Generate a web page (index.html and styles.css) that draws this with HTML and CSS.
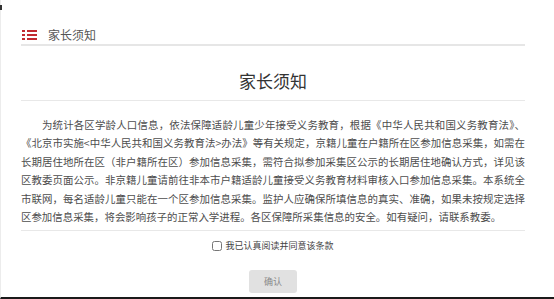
FILE: index.html
```html
<!DOCTYPE html>
<html lang="zh-CN">
<head>
<meta charset="utf-8">
<link rel="stylesheet" href="styles.css">
</head>
<body>
<div class="page">
  <div class="header">
    <svg class="list-icon" width="15" height="10" viewBox="0 0 15 10">
      <rect x="0" y="0" width="3" height="2" fill="#c12a30"/>
      <rect x="5" y="0" width="10" height="2" fill="#c12a30"/>
      <rect x="0" y="4" width="3" height="2" fill="#c12a30"/>
      <rect x="5" y="4" width="10" height="2" fill="#c12a30"/>
      <rect x="0" y="8" width="3" height="2" fill="#c12a30"/>
      <rect x="5" y="8" width="10" height="2" fill="#c12a30"/>
    </svg>
    <span class="header-title">家长须知</span>
  </div>
  <h1 class="title">家长须知</h1>
  <p class="notice"><span class="first-line">为统计各区学龄人口信息，依法保障适龄儿童少年接受义务教育，根据《中华人民共和国义务教育法》、</span>《北京市实施&lt;中华人民共和国义务教育法&gt;办法》等有关规定，京籍儿童在户籍所在区参加信息采集，如需在长期居住地所在区（非户籍所在区）参加信息采集，需符合拟参加采集区公示的长期居住地确认方式，详见该区教委页面公示。非京籍儿童请前往非本市户籍适龄儿童接受义务教育材料审核入口参加信息采集。本系统全市联网，每名适龄儿童只能在一个区参加信息采集。监护人应确保所填信息的真实、准确，如果未按规定选择区参加信息采集，将会影响孩子的正常入学进程。各区保障所采集信息的安全。如有疑问，请联系教委。</p>
  <div class="agree">
    <label class="agree-label"><input type="checkbox" class="agree-box"><span>我已认真阅读并同意该条款</span></label>
  </div>
  <div class="actions">
    <button class="confirm" type="button">确认</button>
  </div>
</div>
</body>
</html>
```

FILE: styles.css
```css
html, body {
  margin: 0;
  padding: 0;
  background: #ffffff;
}
body {
  font-family: "Noto Sans CJK SC", "Noto Sans", sans-serif;
  height: 299px;
  overflow: hidden;
}
.page {
  box-sizing: border-box;
  height: 299px;
  padding: 0 29px 0 20px;
  border-left: 1px solid #ececec;
  border-bottom: 2px solid #1a1a1a;
  position: relative;
}
.page::before {
  content: "";
  position: absolute;
  left: -1px;
  top: 5px;
  width: 2px;
  height: 5px;
  background: #333;
}
.header {
  display: flex;
  align-items: center;
  height: 18px;
  padding-top: 26px;
  border-bottom: 2px solid #e6e6e6;
  padding-left: 1px;
}
.list-icon {
  display: block;
  margin-right: 11px;
}
.header-title {
  font-size: 12px;
  line-height: 18px;
  color: #555;
}
.title {
  margin: 0;
  padding: 24px 0 8px;
  font-size: 17px;
  line-height: 22px;
  font-weight: normal;
  color: #333;
  text-align: center;
  border-bottom: 1px solid #e8e8e8;
}
.notice {
  margin: 0;
  padding: 15px 0 4px;
  font-size: 10.45px;
  line-height: 18.4px;
  color: #4d4d4d;
  text-align: justify;
  border-bottom: 1px solid #e8e8e8;
}
.first-line {
  display: block;
  text-indent: 2em;
  text-align-last: justify;
}
.agree {
  display: flex;
  justify-content: center;
  padding-top: 8px;
}
.agree-label {
  display: flex;
  align-items: center;
  font-size: 9px;
  line-height: 14px;
  color: #444;
}
.agree-box {
  margin: 0 3px 0 0;
  width: 10px;
  height: 10px;
}
.actions {
  display: flex;
  justify-content: center;
  padding-top: 17px;
}
.confirm {
  width: 48px;
  height: 23px;
  border: none;
  border-radius: 3px;
  background: #e1e1e1;
  color: #888;
  font-family: "Noto Sans CJK SC", sans-serif;
  font-size: 9px;
  padding: 0;
}
```
